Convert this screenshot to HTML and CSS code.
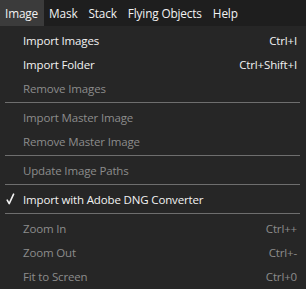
FILE: index.html
```html
<!DOCTYPE html>
<html>
<head>
<meta charset="utf-8">
<link rel="stylesheet" href="styles.css">
</head>
<body>
<div class="menubar">
  <span class="top active">Image</span>
  <span class="top">Mask</span>
  <span class="top">Stack</span>
  <span class="top">Flying Objects</span>
  <span class="top">Help</span>
</div>
<div class="dropdown">
  <div class="item"><span class="check"></span><span class="label">Import Images</span><span class="key">Ctrl+I</span></div>
  <div class="item"><span class="check"></span><span class="label">Import Folder</span><span class="key">Ctrl+Shift+I</span></div>
  <div class="item disabled"><span class="check"></span><span class="label">Remove Images</span><span class="key"></span></div>
  <div class="sep"></div>
  <div class="item disabled"><span class="check"></span><span class="label">Import Master Image</span><span class="key"></span></div>
  <div class="item disabled"><span class="check"></span><span class="label">Remove Master Image</span><span class="key"></span></div>
  <div class="sep"></div>
  <div class="item disabled"><span class="check"></span><span class="label">Update Image Paths</span><span class="key"></span></div>
  <div class="sep"></div>
  <div class="item"><span class="check"><svg class="tick" width="10" height="12" viewBox="0 0 10 12"><path d="M1.2 7.2 L3.2 10.6 L7.6 1.2" fill="none" stroke="#f2f2f2" stroke-width="1.6" stroke-linecap="round" stroke-linejoin="round"/></svg></span><span class="label">Import with Adobe DNG Converter</span><span class="key"></span></div>
  <div class="sep"></div>
  <div class="item disabled"><span class="check"></span><span class="label">Zoom In</span><span class="key">Ctrl++</span></div>
  <div class="item disabled"><span class="check"></span><span class="label">Zoom Out</span><span class="key">Ctrl+-</span></div>
  <div class="item disabled"><span class="check"></span><span class="label">Fit to Screen</span><span class="key">Ctrl+0</span></div>
</div>
</body>
</html>
```
FILE: styles.css
```css
html, body {
  margin: 0;
  padding: 0;
  background: #1b1b1b;
  width: 306px;
  height: 289px;
  overflow: hidden;
  font-family: "Open Sans", "Noto Sans", sans-serif;
  font-size: 11.5px;
  letter-spacing: -0.15px;
  color: #f2f2f2;
}
.menubar {
  display: flex;
  height: 26px;
  background: #1e1e1e;
  align-items: stretch;
}
.top {
  display: flex;
  align-items: center;
  padding: 0 6px 1px 5px;
  font-size: 11.8px;
}
.top.active {
  background: #3b3b3b;
}
.dropdown {
  background: #262626;
  padding: 2px 0 3px 0;
  display: flex;
  flex-direction: column;
  border-bottom: 1px solid #151515;
}
.item {
  display: flex;
  align-items: center;
  height: 24px;
}
.check {
  width: 23px;
  display: flex;
  align-items: center;
  padding-left: 6px;
  box-sizing: border-box;
}
.tick {
  display: block;
}
.label {
  flex: 1;
}
.key {
  padding-right: 9px;
}
.disabled {
  color: #8c8c8c;
}
.sep {
  height: 1px;
  background: #6e6e6e;
  margin: 2px 6px 2px 5px;
}
```
